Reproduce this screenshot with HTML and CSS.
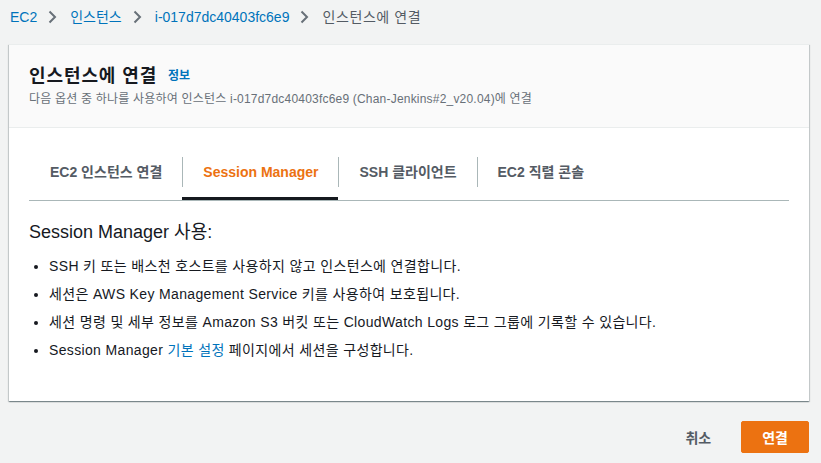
FILE: index.html
```html
<!DOCTYPE html>
<html lang="ko">
<head>
  <title>인스턴스에 연결 | EC2</title>
  <meta charset="UTF-8">
  <meta name="viewport" content="width=device-width, initial-scale=1">

  <link rel="stylesheet" href="styles.css">
</head>
<body>

  <nav class="breadcrumbs">
    <a href="#">EC2</a>
    <svg class="chevron" width="9" height="14" viewBox="0 0 9 14"><path d="M1.5 1.5 L7 7 L1.5 12.5" /></svg>
    <a href="#">인스턴스</a>
    <svg class="chevron" width="9" height="14" viewBox="0 0 9 14"><path d="M1.5 1.5 L7 7 L1.5 12.5" /></svg>
    <a href="#">i-017d7dc40403fc6e9</a>
    <svg class="chevron" width="9" height="14" viewBox="0 0 9 14"><path d="M1.5 1.5 L7 7 L1.5 12.5" /></svg>
    <span class="current">인스턴스에 연결</span>
  </nav>

  <div class="page">
    <div class="card">
      <div class="card-header">
        <h1>인스턴스에 연결 <a href="#" class="info">정보</a></h1>
        <p class="description">다음 옵션 중 하나를 사용하여 인스턴스 i-017d7dc40403fc6e9 (Chan-Jenkins#2_v20.04)에 연결</p>
      </div>

      <div class="card-body">
        <ul class="tabs">
          <li class="tab"><span class="tab-label">EC2 인스턴스 연결</span></li>
          <li class="tab active"><span class="tab-label">Session Manager</span></li>
          <li class="tab"><span class="tab-label">SSH 클라이언트</span></li>
          <li class="tab"><span class="tab-label">EC2 직렬 콘솔</span></li>
        </ul>

        <h2>Session Manager 사용:</h2>
        <ul class="features">
          <li>SSH 키 또는 배스천 호스트를 사용하지 않고 인스턴스에 연결합니다.</li>
          <li>세션은 AWS Key Management Service 키를 사용하여 보호됩니다.</li>
          <li>세션 명령 및 세부 정보를 Amazon S3 버킷 또는 CloudWatch Logs 로그 그룹에 기록할 수 있습니다.</li>
          <li>Session Manager <a href="#">기본 설정</a> 페이지에서 세션을 구성합니다.</li>
        </ul>
      </div>
    </div>

    <div class="actions">
      <button class="btn-link">취소</button>
      <button class="btn-primary">연결</button>
    </div>
  </div>

</body>
</html>
```

FILE: styles.css
```css
* {
  box-sizing: border-box;
}

body {
  margin: 0;
  font-family: "Liberation Sans", "Noto Sans CJK KR", sans-serif;
  font-size: 14px;
  color: #16191f;
  background-color: #f2f3f3;
}

a {
  color: #0073bb;
  text-decoration: none;
}

/* breadcrumbs */
.breadcrumbs {
  display: flex;
  align-items: center;
  height: 34px;
  padding: 0 10px;
  line-height: 20px;
}

.breadcrumbs .chevron {
  margin: 0 13px 0 11px;
}

.chevron path {
  fill: none;
  stroke: #687078;
  stroke-width: 2;
}

.breadcrumbs .current {
  color: #545b64;
  letter-spacing: 0.6px;
}

.page {
  margin: 10px 12px 0 9px;
}

/* card */
.card {
  background-color: #fff;
  border-top: 1px solid #eaeded;
  box-shadow: 0 1px 1px 0 rgba(0, 28, 36, 0.3), 1px 1px 1px 0 rgba(0, 28, 36, 0.15), -1px 1px 1px 0 rgba(0, 28, 36, 0.15);
}

.card-header {
  background-color: #fafafa;
  border-bottom: 1px solid #eaeded;
  padding: 20px 20px 20px;
}

.card-header h1 {
  margin: 0;
  font-size: 18px;
  line-height: 22px;
  font-weight: bold;
  letter-spacing: 0.9px;
}

.card-header .info {
  font-size: 12px;
  margin-left: 5px;
  letter-spacing: 0;
  vertical-align: 2px;
}

.description {
  margin: 4px 0 0;
  font-size: 12px;
  line-height: 16px;
  color: #687078;
  letter-spacing: 0.2px;
}

.card-body {
  padding: 29px 20px 37px;
}

/* tabs */
.tabs {
  display: flex;
  list-style: none;
  margin: 0;
  padding: 0;
  border-bottom: 1px solid #aab7b8;
}

.tab {
  padding-bottom: 10px;
  border-bottom: 3px solid transparent;
}

.tab-label {
  display: block;
  padding: 0 20px;
  line-height: 30px;
  font-weight: bold;
  color: #545b64;
  border-left: 1px solid #aab7b8;
}

.tab:first-child .tab-label {
  border-left-color: transparent;
}

.tab.active {
  border-bottom-color: #16191f;
}

.tab.active .tab-label {
  color: #ec7211;
}

.card-body h2 {
  margin: 20px 0 0;
  font-size: 18px;
  line-height: 22px;
  font-weight: normal;
}

.features {
  margin: 9px 0 0;
  padding-left: 20px;
}

.features li {
  line-height: 28px;
  letter-spacing: 0.35px;
}

/* footer buttons */
.actions {
  display: flex;
  justify-content: flex-end;
  align-items: center;
  gap: 9px;
  padding-top: 20px;
}

.actions button {
  font-family: inherit;
  font-size: 14px;
  font-weight: bold;
  height: 32px;
  padding: 0 20px;
  border-radius: 2px;
  cursor: pointer;
}

.btn-link {
  background: none;
  border: 1px solid transparent;
  color: #545b64;
}

.btn-primary {
  background-color: #ec7211;
  border: 1px solid #ec7211;
  color: #fff;
}
```
